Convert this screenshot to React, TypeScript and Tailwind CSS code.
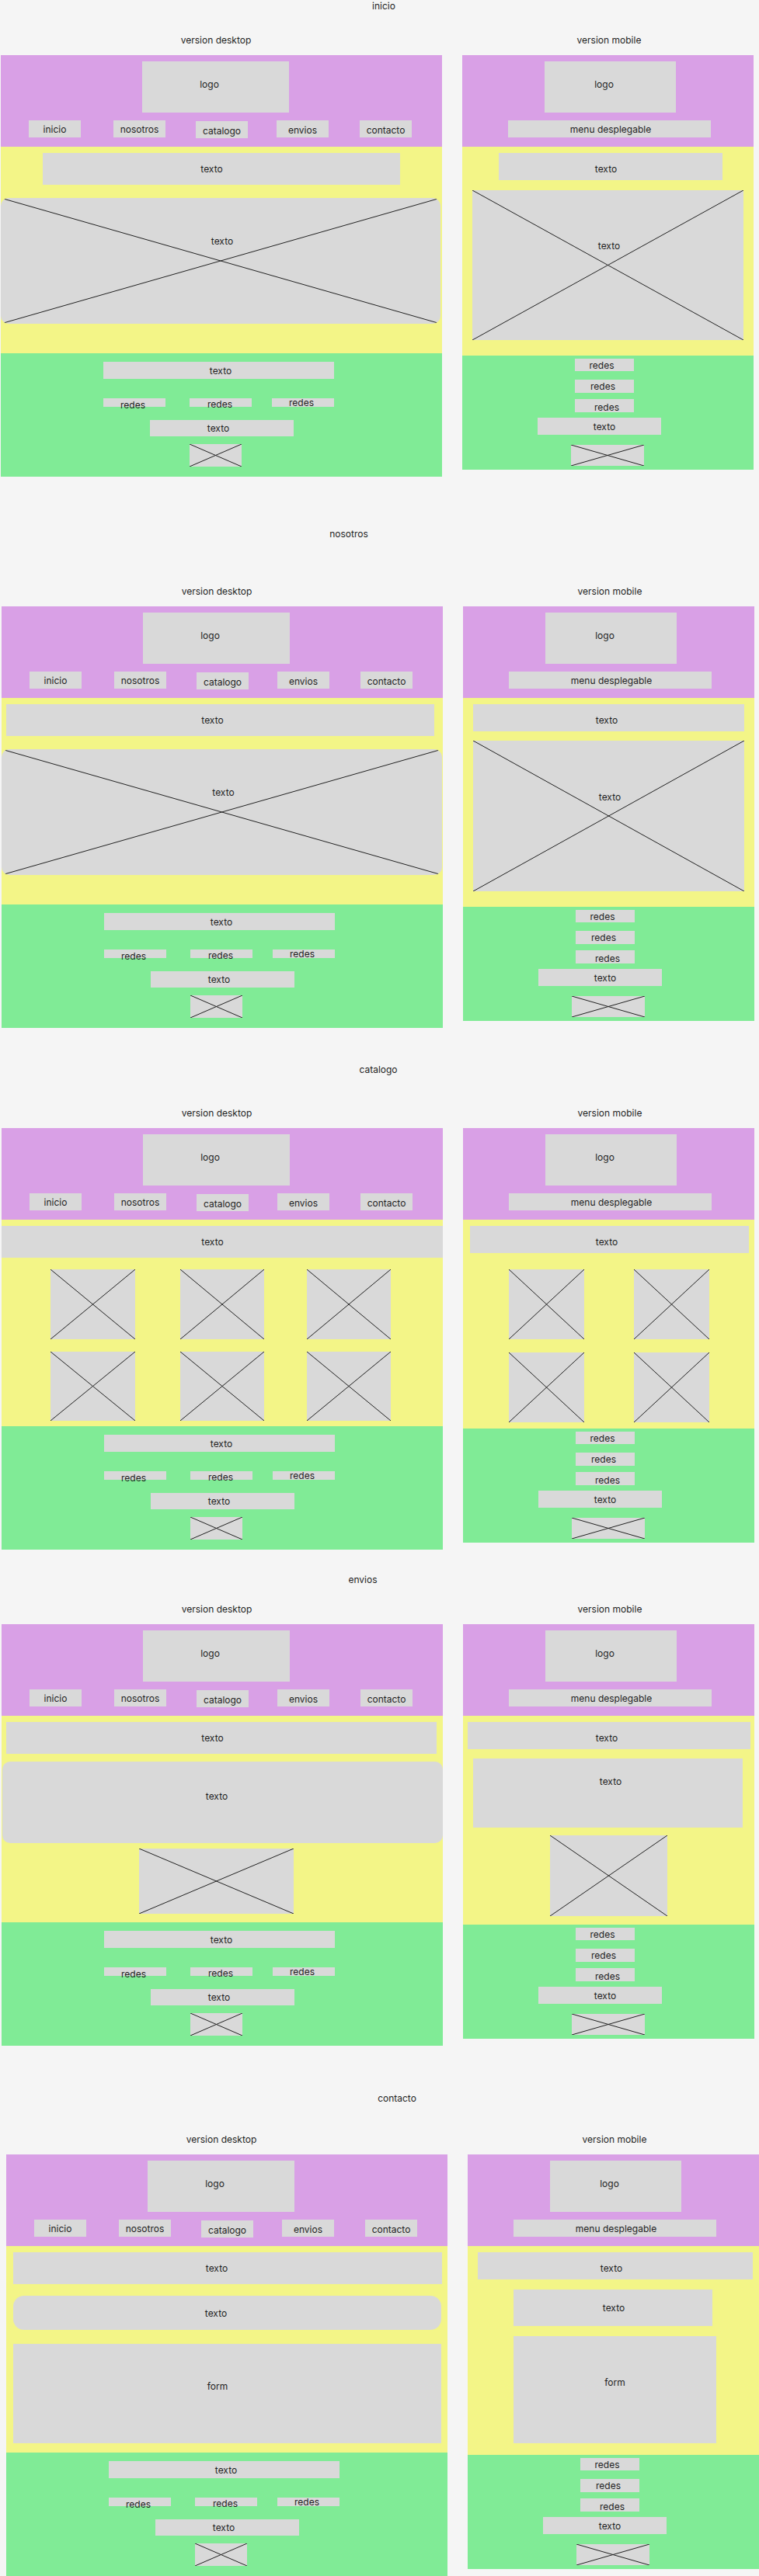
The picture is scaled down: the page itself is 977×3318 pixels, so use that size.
import React from 'react';

type BoxProps = {
  className?: string;
  top?: boolean;
  children?: React.ReactNode;
};

// gray wireframe block with a label
function Box({ className = '', top = false, children }: BoxProps) {
  return (
    <div
      className={`flex justify-center bg-[#d9d9d9] ${top ? 'items-start' : 'items-center'} ${className}`}
    >
      {children}
    </div>
  );
}

// image placeholder: gray block crossed by two diagonals
function Cross({
  className = '',
  inner = '',
  children,
}: {
  className?: string;
  inner?: string;
  children?: React.ReactNode;
}) {
  return (
    <div className={`relative overflow-hidden bg-[#d9d9d9] ${className}`}>
      <svg
        className="absolute inset-0 h-full w-full"
        viewBox="0 0 100 100"
        preserveAspectRatio="none"
        aria-hidden
      >
        <line x1="0" y1="0" x2="100" y2="100" stroke="#222" strokeWidth="1" vectorEffect="non-scaling-stroke" />
        <line x1="0" y1="100" x2="100" y2="0" stroke="#222" strokeWidth="1" vectorEffect="non-scaling-stroke" />
      </svg>
      {children && <div className={`relative flex justify-center ${inner}`}>{children}</div>}
    </div>
  );
}

function DesktopHeader() {
  return (
    <div className="h-[118px] bg-[#d9a0e6] pt-[8px]">
      <Box className="ml-[182px] h-[66px] w-[189px] pr-[16px] pb-[8px]">logo</Box>
      <div className="mt-[10px] flex items-start pl-[36px]">
        <Box className="h-[22px] w-[67px]">inicio</Box>
        <Box className="ml-[42px] h-[22px] w-[67px]">nosotros</Box>
        <Box className="ml-[39px] mt-[1px] h-[22px] w-[67px] pt-[2px]">catalogo</Box>
        <Box className="ml-[37px] h-[22px] w-[67px] pt-[3px]">envios</Box>
        <Box className="ml-[40px] h-[22px] w-[67px] pt-[3px]">contacto</Box>
      </div>
    </div>
  );
}

function MobileHeader() {
  return (
    <div className="h-[118px] bg-[#d9a0e6] pt-[8px]">
      <Box className="ml-[106px] h-[66px] w-[169px] pr-[16px] pb-[8px]">logo</Box>
      <Box className="ml-[59px] mt-[10px] h-[22px] w-[261px] pl-[3px]">menu desplegable</Box>
    </div>
  );
}

function DesktopFooter() {
  return (
    <div className="h-[159px] bg-[#80eb96] pt-[11px]">
      <Box className="ml-[132px] h-[22px] w-[297px] pl-[5px]">texto</Box>
      <div className="mt-[25px] flex pl-[132px]">
        <Box className="h-[11px] w-[80px] pt-[5px] pr-[4px]">redes</Box>
        <Box className="ml-[31px] h-[11px] w-[80px] pt-[3px] pr-[2px]">redes</Box>
        <Box className="ml-[26px] h-[11px] w-[80px] pr-[4px]">redes</Box>
      </div>
      <Box className="ml-[192px] mt-[17px] h-[21px] w-[185px] pr-[9px]">texto</Box>
      <Cross className="ml-[243px] mt-[10px] h-[29px] w-[67px]" />
    </div>
  );
}

function MobileFooter() {
  return (
    <div className="h-[147px] bg-[#80eb96] pt-[4px]">
      <Box className="ml-[145px] h-[16px] w-[76px] pr-[7px]">redes</Box>
      <Box className="ml-[145px] mt-[11px] h-[17px] w-[76px] pr-[4px]">redes</Box>
      <Box className="ml-[145px] mt-[8px] h-[17px] w-[76px] pt-[3px] pl-[6px]">redes</Box>
      <Box className="ml-[97px] mt-[7px] h-[22px] w-[159px] pl-[13px]">texto</Box>
      <Cross className="ml-[140px] mt-[13px] h-[27px] w-[94px]" />
    </div>
  );
}

type SectionProps = {
  title: string;
  titleClass: string;
  versionClass: string;
  rowClass: string;
  desktop: React.ReactNode;
  mobile: React.ReactNode;
};

function Section({ title, titleClass, versionClass, rowClass, desktop, mobile }: SectionProps) {
  return (
    <section>
      <div className={`text-center ${titleClass}`}>{title}</div>
      <div className={`flex ${rowClass} ${versionClass}`}>
        <div className="w-[568px] pr-[14px] text-center">version desktop</div>
        <div className="ml-[26px] w-[375px] pl-[3px] text-center">version mobile</div>
      </div>
      <div className={`mt-[12px] flex items-start ${rowClass}`}>
        <div className="w-[568px] shrink-0">
          <DesktopHeader />
          <div className="h-[266px] bg-[#f3f587] pt-[8px]">{desktop}</div>
          <DesktopFooter />
        </div>
        <div className="ml-[26px] w-[375px] shrink-0">
          <MobileHeader />
          <div className="h-[269px] bg-[#f3f587] pt-[8px]">{mobile}</div>
          <MobileFooter />
        </div>
      </div>
    </section>
  );
}

export default function App() {
  return (
    <div className="min-h-screen overflow-x-hidden bg-[#f5f5f5] font-['Inter','Noto_Sans',sans-serif] text-[12px] leading-[15px] text-[#1e1e1e]">
      <Section
        title="inicio"
        titleClass="h-[15px] pl-[11px]"
        versionClass="mt-[29px]"
        rowClass="pl-[1px]"
        desktop={
          <>
            <Box className="ml-[54px] h-[41px] w-[460px] pr-[25px]">texto</Box>
            <Cross className="mt-[17px] h-[162px] w-[566px] rounded-[10px]" inner="pt-[48px] pl-[4px]">
              texto
            </Cross>
          </>
        }
        mobile={
          <>
            <Box className="ml-[47px] h-[35px] w-[288px] pt-[6px] pr-[12px]">texto</Box>
            <Cross className="ml-[13px] mt-[13px] h-[193px] w-[349px]" inner="pt-[64px] pl-[3px]">
              texto
            </Cross>
          </>
        }
      />

      <Section
        title="nosotros"
        titleClass="mt-[66px] pr-[79px]"
        versionClass="mt-[59px]"
        rowClass="pl-[2px]"
        desktop={
          <>
            <Box className="ml-[6px] h-[41px] w-[551px] pr-[20px]">texto</Box>
            <Cross className="mt-[17px] h-[162px] w-[567px] rounded-[10px]" inner="pt-[48px] pl-[4px]">
              texto
            </Cross>
          </>
        }
        mobile={
          <>
            <Box className="ml-[13px] h-[35px] w-[349px] pt-[6px] pr-[5px]">texto</Box>
            <Cross className="ml-[13px] mt-[12px] h-[194px] w-[349px]" inner="pt-[65px] pl-[3px]">
              texto
            </Cross>
          </>
        }
      />

      <Section
        title="catalogo"
        titleClass="mt-[46px] pr-[3px]"
        versionClass="mt-[41px]"
        rowClass="pl-[2px]"
        desktop={
          <>
            <Box className="h-[41px] w-full pr-[25px]">texto</Box>
            <div className="mt-[15px] flex pl-[63px]">
              <Cross className="h-[90px] w-[109px]" />
              <Cross className="ml-[58px] h-[90px] w-[108px]" />
              <Cross className="ml-[55px] h-[90px] w-[108px]" />
            </div>
            <div className="mt-[16px] flex pl-[63px]">
              <Cross className="h-[89px] w-[109px]" />
              <Cross className="ml-[58px] h-[89px] w-[108px]" />
              <Cross className="ml-[55px] h-[89px] w-[108px]" />
            </div>
          </>
        }
        mobile={
          <>
            <Box className="ml-[9px] h-[35px] w-[359px] pt-[6px] pr-[7px]">texto</Box>
            <div className="mt-[21px] flex pl-[59px]">
              <Cross className="h-[90px] w-[97px]" />
              <Cross className="ml-[64px] h-[90px] w-[97px]" />
            </div>
            <div className="mt-[17px] flex pl-[59px]">
              <Cross className="h-[90px] w-[97px]" />
              <Cross className="ml-[64px] h-[90px] w-[97px]" />
            </div>
          </>
        }
      />

      <Section
        title="envios"
        titleClass="mt-[31px] pr-[43px]"
        versionClass="mt-[23px]"
        rowClass="pl-[2px]"
        desktop={
          <>
            <Box className="ml-[6px] h-[41px] w-[554px] pr-[23px]">texto</Box>
            <Box className="ml-[1px] mt-[10px] h-[105px] w-[567px] rounded-[10px] pr-[15px] pb-[17px]">
              texto
            </Box>
            <Cross className="ml-[177px] mt-[7px] h-[84px] w-[199px]" />
          </>
        }
        mobile={
          <>
            <Box className="ml-[6px] h-[35px] w-[364px] pt-[6px] pr-[6px]">texto</Box>
            <Box top className="ml-[13px] mt-[12px] h-[89px] w-[347px] pt-[22px] pl-[7px]">
              texto
            </Box>
            <Cross className="ml-[112px] mt-[10px] h-[104px] w-[151px]" />
          </>
        }
      />

      <Section
        title="contacto"
        titleClass="mt-[60px] pl-[45px]"
        versionClass="mt-[38px]"
        rowClass="pl-[8px]"
        desktop={
          <>
            <Box className="ml-[9px] h-[41px] w-[552px] pr-[28px]">texto</Box>
            <Box className="ml-[9px] mt-[15px] h-[44px] w-[551px] rounded-[14px] pr-[29px]">texto</Box>
            <Box className="ml-[9px] mt-[18px] h-[128px] w-[551px] pr-[25px] pb-[20px]">form</Box>
          </>
        }
        mobile={
          <>
            <Box className="ml-[13px] h-[35px] w-[354px] pt-[6px] pr-[10px]">texto</Box>
            <Box className="ml-[59px] mt-[13px] h-[47px] w-[256px] pl-[2px]">texto</Box>
            <Box top className="ml-[59px] mt-[13px] h-[138px] w-[261px] pt-[52px]">
              form
            </Box>
          </>
        }
      />
    </div>
  );
}
